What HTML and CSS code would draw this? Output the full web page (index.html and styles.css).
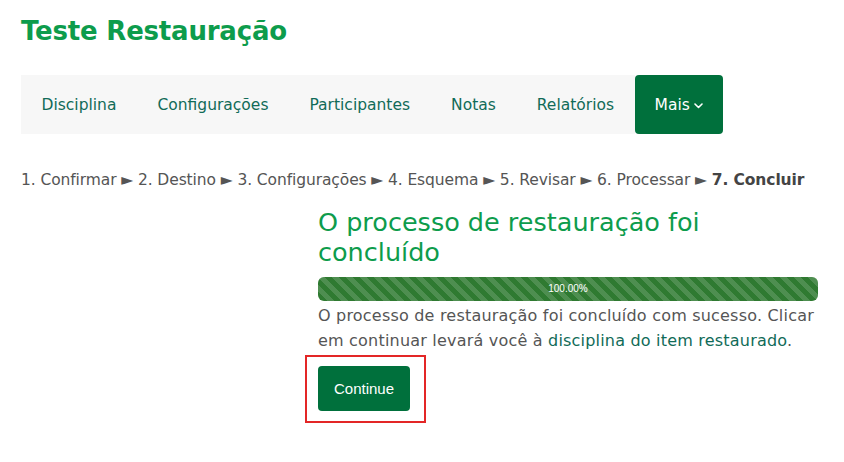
FILE: index.html
```html
<!DOCTYPE html>
<html lang="pt-BR">
<head>
<meta charset="utf-8">
<title>Teste Restauração</title>
<link rel="stylesheet" href="styles.css">
</head>
<body>
<div class="page">
  <h1 class="title">Teste Restauração</h1>
  <nav class="secnav">
    <div class="tabs">
      <a class="tab" href="#">Disciplina</a>
      <a class="tab" href="#">Configurações</a>
      <a class="tab" href="#">Participantes</a>
      <a class="tab" href="#">Notas</a>
      <a class="tab" href="#">Relatórios</a>
    </div>
    <a class="more" href="#">Mais <svg class="chev" width="9" height="6" viewBox="0 0 9 6"><path d="M1 1 L4.5 4.5 L8 1" fill="none" stroke="#fff" stroke-width="1.6" stroke-linecap="round" stroke-linejoin="round"/></svg></a>
  </nav>
  <div class="steps">1. Confirmar ► 2. Destino ► 3. Configurações ► 4. Esquema ► 5. Revisar ► 6. Processar ► <b>7. Concluir</b></div>
  <div class="main">
    <div class="col">
      <h2 class="heading">O processo de restauração foi concluído</h2>
      <div class="progress"><div class="bar">100.00%</div></div>
      <p class="msg">O processo de restauração foi concluído com sucesso. Clicar em continuar levará você à <a href="#" class="link">disciplina do item restaurado</a>.</p>
      <div class="highlight"><button class="btn">Continue</button></div>
    </div>
  </div>
</div>
</body>
</html>
```

FILE: styles.css
```css
html, body { margin: 0; padding: 0; background: #fff; }
body { font-family: "DejaVu Sans", sans-serif; color: #555; }
.page { padding: 0 21px; }
.title {
  margin: 0;
  padding-top: 12px;
  font-size: 26px;
  line-height: 38px;
  font-weight: bold;
  color: #0d9c4c;
  letter-spacing: -0.2px;
}
.secnav { display: flex; margin-top: 25px; height: 59px; }
.tabs { display: flex; background: #f7f7f7; }
.tab {
  display: flex; align-items: center;
  padding: 0 20.5px;
  font-size: 15.5px;
  color: #116b58;
  text-decoration: none;
}
.more {
  display: flex; align-items: center; gap: 4px;
  padding: 0 20px;
  background: #00703c;
  color: #fff;
  border-radius: 4px;
  font-size: 15.5px;
  text-decoration: none;
}
.chev { margin-top: 2px; }
.steps {
  margin-top: 35px;
  font-size: 15.5px;
  line-height: 22px;
  color: #555;
  letter-spacing: -0.1px;
  white-space: nowrap;
}
.steps b { color: #444; }
.main { padding-left: 297px; }
.col { width: 500px; }
.heading {
  margin: 16px 0 0;
  font-size: 25.5px;
  line-height: 30px;
  font-weight: normal;
  color: #0d9c4c;
}
.progress {
  margin-top: 10px;
  height: 24px;
  border-radius: 6px;
  overflow: hidden;
  background: #e9ecef;
}
.bar {
  height: 100%;
  background-color: #2f7a31;
  background-image: linear-gradient(45deg, rgba(255,255,255,.15) 25%, transparent 25%, transparent 50%, rgba(255,255,255,.15) 50%, rgba(255,255,255,.15) 75%, transparent 75%, transparent);
  background-size: 14px 14px;
  color: #fff;
  font-family: "Liberation Sans", Arial, sans-serif;
  font-size: 10px;
  line-height: 24px;
  text-align: center;
}
.msg {
  margin: 2px 0 0;
  font-size: 16px;
  line-height: 25px;
  color: #555;
  letter-spacing: 0.2px;
}
.link { color: #116b58; text-decoration: none; }
.highlight {
  display: inline-block;
  margin: 2px 0 0 -13px;
  padding: 9px 14px 10px 11px;
  border: 2px solid #e32626;
}
.btn {
  display: block;
  width: 92px; height: 45px;
  border: 0;
  border-radius: 4px;
  background: #00703c;
  color: #fff;
  font-family: "Liberation Sans", Arial, sans-serif;
  font-size: 15px;
  padding: 0;
}
```
